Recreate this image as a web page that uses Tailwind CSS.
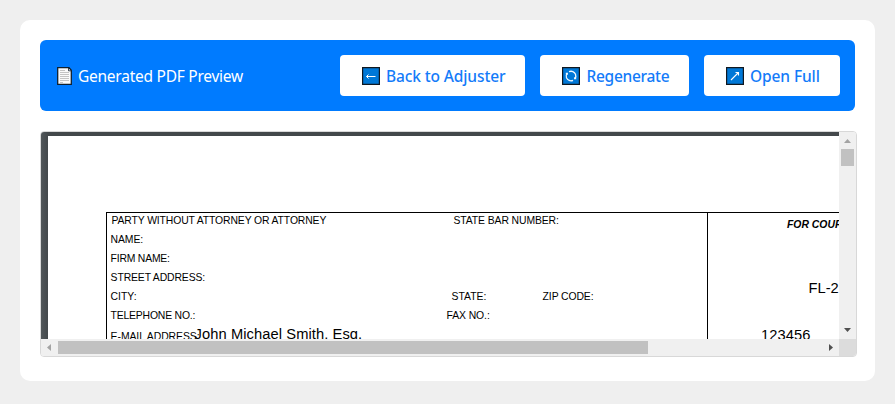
<!DOCTYPE html>
<html lang="en">
<head>
<meta charset="utf-8">
<title>Generated PDF Preview</title>
<script src="https://cdn.jsdelivr.net/npm/@tailwindcss/browser@4"></script>
</head>
<body class="h-[404px] overflow-hidden bg-[#efefef] p-5 font-['Noto_Sans','Open_Sans',sans-serif]">
<main class="h-[361px] w-[855px] rounded-[10px] bg-white p-5">
  <header class="flex h-[71px] items-center rounded-[6px] bg-[#007bff] px-[15px]">
    <div class="flex items-center text-white">
      <svg class="ml-[2px] h-[18px] w-[15px]" viewBox="0 0 15 18">
        <path d="M.7.7H12l2.300 2.600v14H.7z" fill="#fafafa" stroke="#10202e" stroke-width="1.300"/>
        <path d="M11.500 1v2.800h2.500" fill="none" stroke="#10202e" stroke-width=".8"/>
        <path d="M3 3.500h5M3 5.500h9M3 7.500h9M3 9.500h9M3 11.500h9M3 13.500h9M3 15.500h3" stroke="#c4c4c4"/>
      </svg>
      <span class="ml-[6px] pt-px text-[15.500px] leading-5 tracking-[-0.250px] whitespace-nowrap">Generated PDF Preview</span>
    </div>
    <nav class="ml-auto flex gap-[15px] text-[15.500px] leading-5 font-medium text-[#137bf9]">
      <button class="flex h-[41px] w-[185px] items-center rounded-[4px] bg-white pl-[22px] whitespace-nowrap">
        <svg class="mr-[6px] h-[18px] w-[18px]" viewBox="0 0 18 18"><path d="M.6.6h16.800v16.800H.6z" fill="#0078d7" stroke="#101820" stroke-width="1.200"/><path d="M4.500 9.500h9M6.500 7.500l-2 2 2 2" fill="none" stroke="#fff" stroke-width="1"/></svg>
        <span class="pt-px tracking-[-0.120px]">Back to Adjuster</span>
      </button>
      <button class="flex h-[41px] w-[149px] items-center rounded-[4px] bg-white pl-[22px] whitespace-nowrap">
        <svg class="mr-[6px] h-[18px] w-[18px]" viewBox="0 0 18 18"><path d="M.6.6h16.800v16.800H.6z" fill="#0078d7" stroke="#101820" stroke-width="1.200"/><path d="M4.500 10.800A4.800 4.800 0 0 1 5 6.300M7 4.700A4.800 4.800 0 0 1 13.500 7.300M13.500 7.300A4.800 4.800 0 0 1 13 11.700M11 13.300A4.800 4.800 0 0 1 4.500 10.800M3.800 6.300h1.500v1.500M14.200 11.700h-1.500v-1.500" fill="none" stroke="#f4faff" stroke-width="1.300"/></svg>
        <span class="pt-px pl-[0.500px] tracking-[-0.300px]">Regenerate</span>
      </button>
      <button class="flex h-[41px] w-[136px] items-center rounded-[4px] bg-white pl-[22px] whitespace-nowrap">
        <svg class="mr-[6px] h-[18px] w-[18px]" viewBox="0 0 18 18"><path d="M.6.6h16.800v16.800H.6z" fill="#0078d7" stroke="#101820" stroke-width="1.200"/><path d="M5 13l7.500-7.500M9.500 5.500h3v3" fill="none" stroke="#fff" stroke-width="1.100"/></svg>
        <span class="pt-px tracking-[-0.100px]">Open Full</span>
      </button>
    </nav>
  </header>

  <section class="mt-5 grid h-[226px] w-[817px] grid-cols-[798px_17px] grid-rows-[207px_17px] overflow-hidden rounded-[4px] border border-[#d8d8d8]">
    <div class="overflow-hidden bg-[linear-gradient(90deg,#51575a,#43484b_7px)] pt-1 pl-[7px]">
      <div class="h-[1000px] w-[1000px] bg-white pt-[76px] pl-[58px] font-['Liberation_Sans',Arial,sans-serif] text-black">
        <div class="flex h-[600px] w-[800px] border-t border-l border-black">
          <div class="w-[601px] shrink-0 border-r border-black text-[10.400px] leading-[19px] whitespace-nowrap [&>div]:h-[19px]">
            <div class="-mt-[2px] flex pl-[4.500px]"><span class="w-[342px] tracking-[-0.120px]">PARTY WITHOUT ATTORNEY OR ATTORNEY</span><span class="tracking-[-0.100px]">STATE BAR NUMBER:</span></div>
            <div class="pl-[3.600px] tracking-[-0.100px]">NAME:</div>
            <div class="pl-[3.600px] tracking-[-0.200px]">FIRM NAME:</div>
            <div class="pl-[3.600px] tracking-[-0.120px]">STREET ADDRESS:</div>
            <div class="flex pl-[3.600px]"><span class="w-[341px]">CITY:</span><span class="w-[91px]">STATE:</span><span class="tracking-[-0.100px]">ZIP CODE:</span></div>
            <div class="flex pl-[3.600px]"><span class="w-[336px] tracking-[-0.180px]">TELEPHONE NO.:</span><span class="tracking-[-0.100px]">FAX NO.:</span></div>
            <div class="flex pt-[2px] pl-[3.600px]"><span class="w-[84px] tracking-[-0.050px]">E-MAIL ADDRESS:</span><span class="-mt-[2px] text-[14.700px] tracking-[0.080px]">John Michael Smith, Esq.</span></div>
          </div>
          <div class="whitespace-nowrap">
            <div class="mt-[2px] pl-[79px] text-[10.400px] leading-5 font-bold italic">FOR COURT USE ONLY</div>
            <div class="mt-[43px] pl-[100.500px] text-[14.700px] leading-5">FL-2</div>
            <div class="mt-[27px] pl-[53px] text-[14.700px] leading-5 tracking-[0.100px]">123456</div>
          </div>
        </div>
      </div>
    </div>
    <div class="flex flex-col items-center bg-[#f0f0f0]">
      <svg class="h-[17px] w-[17px] shrink-0" viewBox="0 0 17 17"><path d="M5 11h7L8.500 7z" fill="#a3a3a3"/></svg>
      <div class="h-[17px] w-[13px] bg-[#c1c1c1]"></div>
      <svg class="mt-auto h-[17px] w-[17px] shrink-0" viewBox="0 0 17 17"><path d="M5 6h7l-3.500 4z" fill="#505050"/></svg>
    </div>
    <div class="flex items-center bg-[#f0f0f0]">
      <svg class="h-[17px] w-[17px] shrink-0" viewBox="0 0 17 17"><path d="M10 5v7L6 8.500z" fill="#a3a3a3"/></svg>
      <div class="h-[13px] w-[590px] bg-[#c1c1c1]"></div>
      <svg class="ml-auto h-[17px] w-[17px] shrink-0" viewBox="0 0 17 17"><path d="M7 5v7l4-3.500z" fill="#505050"/></svg>
    </div>
    <div class="bg-[#dcdcdc]"></div>
  </section>
</main>
</body>
</html>
